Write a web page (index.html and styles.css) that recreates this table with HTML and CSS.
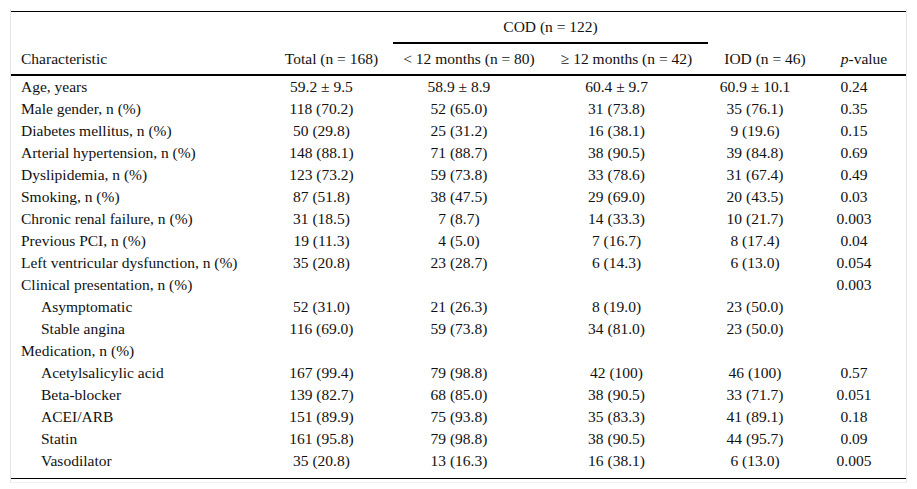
FILE: index.html
```html
<!DOCTYPE html>
<html>
<head>
<meta charset="utf-8">
<link rel="stylesheet" href="styles.css">
</head>
<body>
<div class="frame">
<table class="tbl">
<colgroup>
<col class="c1"><col class="c2"><col class="c3"><col class="c4"><col class="c5"><col class="c6">
</colgroup>
<thead>
<tr class="h1">
<th></th><th></th><th colspan="2" class="group">COD (n = 122)</th><th></th><th></th>
</tr>
<tr class="h2">
<th class="left">Characteristic</th>
<th>Total (n = 168)</th>
<th>&lt; 12 months (n = 80)</th>
<th>&ge; 12 months (n = 42)</th>
<th>IOD (n = 46)</th>
<th><i>p</i>-value</th>
</tr>
</thead>
<tbody>
<tr><td class="left">Age, years</td><td>59.2 ± 9.5</td><td>58.9 ± 8.9</td><td>60.4 ± 9.7</td><td>60.9 ± 10.1</td><td>0.24</td></tr>
<tr><td class="left">Male gender, n (%)</td><td>118 (70.2)</td><td>52 (65.0)</td><td>31 (73.8)</td><td>35 (76.1)</td><td>0.35</td></tr>
<tr><td class="left">Diabetes mellitus, n (%)</td><td>50 (29.8)</td><td>25 (31.2)</td><td>16 (38.1)</td><td>9 (19.6)</td><td>0.15</td></tr>
<tr><td class="left">Arterial hypertension, n (%)</td><td>148 (88.1)</td><td>71 (88.7)</td><td>38 (90.5)</td><td>39 (84.8)</td><td>0.69</td></tr>
<tr><td class="left">Dyslipidemia, n (%)</td><td>123 (73.2)</td><td>59 (73.8)</td><td>33 (78.6)</td><td>31 (67.4)</td><td>0.49</td></tr>
<tr><td class="left">Smoking, n (%)</td><td>87 (51.8)</td><td>38 (47.5)</td><td>29 (69.0)</td><td>20 (43.5)</td><td>0.03</td></tr>
<tr><td class="left">Chronic renal failure, n (%)</td><td>31 (18.5)</td><td>7 (8.7)</td><td>14 (33.3)</td><td>10 (21.7)</td><td>0.003</td></tr>
<tr><td class="left">Previous PCI, n (%)</td><td>19 (11.3)</td><td>4 (5.0)</td><td>7 (16.7)</td><td>8 (17.4)</td><td>0.04</td></tr>
<tr><td class="left">Left ventricular dysfunction, n (%)</td><td>35 (20.8)</td><td>23 (28.7)</td><td>6 (14.3)</td><td>6 (13.0)</td><td>0.054</td></tr>
<tr><td class="left">Clinical presentation, n (%)</td><td></td><td></td><td></td><td></td><td>0.003</td></tr>
<tr><td class="left sub">Asymptomatic</td><td>52 (31.0)</td><td>21 (26.3)</td><td>8 (19.0)</td><td>23 (50.0)</td><td></td></tr>
<tr><td class="left sub">Stable angina</td><td>116 (69.0)</td><td>59 (73.8)</td><td>34 (81.0)</td><td>23 (50.0)</td><td></td></tr>
<tr><td class="left">Medication, n (%)</td><td></td><td></td><td></td><td></td><td></td></tr>
<tr><td class="left sub">Acetylsalicylic acid</td><td>167 (99.4)</td><td>79 (98.8)</td><td>42 (100)</td><td>46 (100)</td><td>0.57</td></tr>
<tr><td class="left sub">Beta-blocker</td><td>139 (82.7)</td><td>68 (85.0)</td><td>38 (90.5)</td><td>33 (71.7)</td><td>0.051</td></tr>
<tr><td class="left sub">ACEI/ARB</td><td>151 (89.9)</td><td>75 (93.8)</td><td>35 (83.3)</td><td>41 (89.1)</td><td>0.18</td></tr>
<tr><td class="left sub">Statin</td><td>161 (95.8)</td><td>79 (98.8)</td><td>38 (90.5)</td><td>44 (95.7)</td><td>0.09</td></tr>
<tr><td class="left sub">Vasodilator</td><td>35 (20.8)</td><td>13 (16.3)</td><td>16 (38.1)</td><td>6 (13.0)</td><td>0.005</td></tr>
<tr class="pad"><td colspan="6"></td></tr>
</tbody>
</table>
</div>
</body>
</html>
```

FILE: styles.css
```css
html, body {
  margin: 0;
  padding: 0;
  background: #fff;
}
body {
  font-family: "Liberation Serif", "Times New Roman", serif;
  font-size: 15.5px;
  color: #111;
}
.frame {
  margin: 9px 0 0 10px;
  width: 895px;
  border-left: 1px solid #e6e6e6;
  border-right: 1px solid #e6e6e6;
  border-bottom: 1px solid #f0f0f0;
  padding: 2px 0 3px 0;
}
.tbl {
  width: 895px;
  border-collapse: collapse;
  table-layout: fixed;
  border-top: 1px solid #000;
  border-bottom: 1px solid #000;
}
.c1 { width: 259px; }
.c2 { width: 123px; }
.c3 { width: 152px; }
.c4 { width: 163px; }
.c5 { width: 114px; }
.c6 { width: 84px; }
th {
  font-weight: normal;
  text-align: center;
  padding: 0;
  white-space: nowrap;
}
.h1 th {
  height: 30px;
  line-height: 30px;
}
.h1 th.group {
  border-bottom: 2px solid #000;
}
.h2 th {
  height: 30px;
  line-height: 30px;
  border-bottom: 2px solid #000;
}
td {
  height: 22px;
  line-height: 22px;
  padding: 0 20px 0 0;
  text-align: center;
  white-space: nowrap;
}
th.left, td.left {
  text-align: left;
  padding-left: 10px;
  padding-right: 0;
}
td.sub {
  padding-left: 30px;
}
.pad td {
  height: 6px;
  line-height: 6px;
  padding: 0;
}
```
